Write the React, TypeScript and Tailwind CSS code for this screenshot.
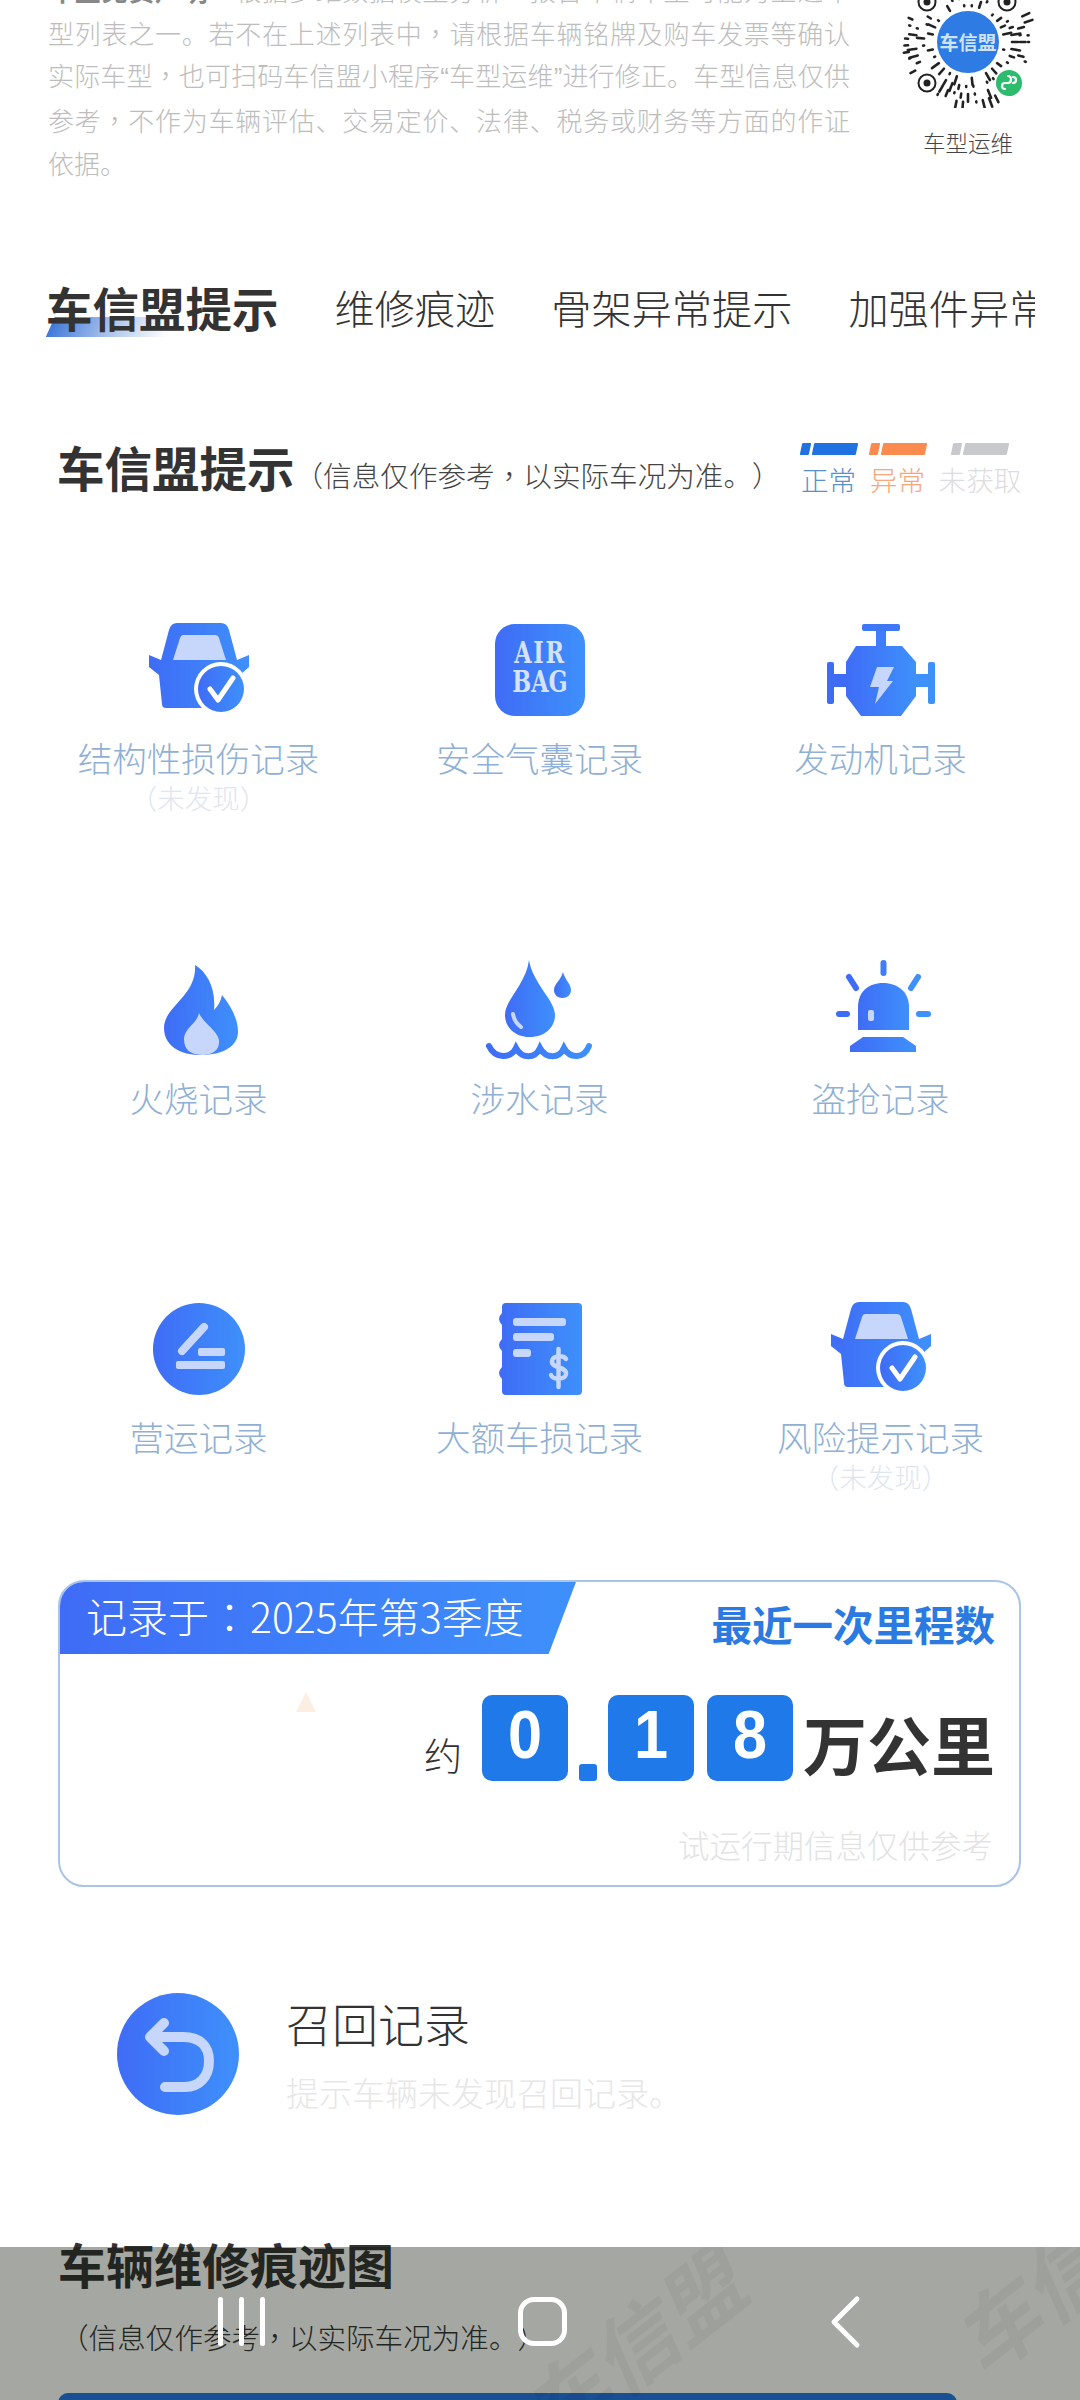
import type { ReactNode } from 'react';

const light = '#c6d7fb';

// 小程序码的放射短线,只是示意
const qrDashes: { a: number; r: number; len: number; w: number }[] = [];
let seed = 7;
const rand = () => {
  seed = (seed * 16807) % 2147483647;
  return seed / 2147483647;
};
for (let ring = 0; ring < 4; ring++) {
  const count = 30 + ring * 9;
  for (let i = 0; i < count; i++) {
    if (rand() < 0.28) continue;
    qrDashes.push({
      a: (i / count) * Math.PI * 2,
      r: 36 + ring * 8,
      len: rand() < 0.4 ? 1 : 3 + rand() * 6,
      w: 2.6,
    });
  }
}

// 参考图里逗号、冒号是居中的,繁体字形才这样
function Cp({ children }: { children: ReactNode }) {
  return <span className="font-['Noto_Sans_CJK_TC',sans-serif]">{children}</span>;
}

function MiniCode() {
  const cx = 68;
  const cy = 66;
  const corners = [
    [27, 26],
    [107, 26],
    [27, 107],
  ];
  return (
    <svg width="136" height="132" viewBox="0 0 136 132" className="shrink-0">
      {qrDashes.map((d, i) => {
        const x1 = cx + Math.cos(d.a) * d.r;
        const y1 = cy + Math.sin(d.a) * d.r;
        const x2 = cx + Math.cos(d.a) * (d.r + d.len);
        const y2 = cy + Math.sin(d.a) * (d.r + d.len);
        const nearCorner = corners.some(([px, py]) => Math.hypot(x1 - px, y1 - py) < 15);
        const nearBadge = Math.hypot(x1 - 109, y1 - 107) < 16;
        if (nearCorner || nearBadge) return null;
        return <line key={i} x1={x1} y1={y1} x2={x2} y2={y2} stroke="#222" strokeWidth={d.w} strokeLinecap="round" />;
      })}
      {corners.map(([px, py]) => (
        <g key={px * 1000 + py}>
          <circle cx={px} cy={py} r="8.5" fill="none" stroke="#222" strokeWidth="2" />
          <circle cx={px} cy={py} r="3.5" fill="#222" />
        </g>
      ))}
      <circle cx={cx} cy={cy} r="31" fill="#2d7be3" />
      <circle cx="109" cy="107" r="13" fill="#2dbb6e" />
      <path d="M105 113c-4 0-4-6 0-6h3c4 0 4-7 0-7M113 101c4 0 4 6 0 6" fill="none" stroke="#fff" strokeWidth="2.2" strokeLinecap="round" />
    </svg>
  );
}

function IconSvg({ children }: { children: ReactNode }) {
  return (
    <svg width="120" height="100" viewBox="0 0 120 100" className="shrink-0 overflow-visible">
      <defs>
        <linearGradient id="iconBlue" x1="0" y1="0" x2="1" y2="0">
          <stop offset="0" stopColor="#3f6cf6" />
          <stop offset="1" stopColor="#3e90fb" />
        </linearGradient>
      </defs>
      {children}
    </svg>
  );
}

const CarIcon = () => (
  <IconSvg>
    <g transform="translate(0 3)">
      <path
        d="M38 0H82Q88 0 90 7L98 37L110 32V44L101 52L99 81Q99 85 95 85H27Q23 85 23 81L20 52L10 44V32L22 37L30 7Q32 0 38 0Z"
        fill="url(#iconBlue)"
      />
      <path d="M44 12H76Q79 12 80 15L87 37H34L41 15Q42 12 44 12Z" fill={light} />
      <circle cx="82" cy="66" r="27" fill="#fff" />
      <circle cx="82" cy="66" r="23" fill="url(#iconBlue)" />
      <path d="M71 66L79 77L94 55" fill="none" stroke="#fff" strokeWidth="5" strokeLinecap="round" strokeLinejoin="round" />
    </g>
  </IconSvg>
);

const AirbagIcon = () => (
  <IconSvg>
    <rect x="15" y="4" width="90" height="92" rx="20" fill="url(#iconBlue)" />
    <g transform="translate(60 0) scale(0.86 1.15)" fontFamily="'DejaVu Serif', serif" fontWeight="700" fontSize="26" fill="#d5e2fc">
      <text x="0" y="37" textAnchor="middle" letterSpacing="2">
        AIR
      </text>
      <text x="0" y="63" textAnchor="middle">
        BAG
      </text>
    </g>
  </IconSvg>
);

const EngineIcon = () => (
  <IconSvg>
    <g transform="translate(0 4)" fill="url(#iconBlue)">
      <path d="M35 22H81L95 38V72L80 92H40L25 72V38Z" />
      <rect x="41" y="0" width="38" height="7" rx="2" fill="#3f78f7" />
      <rect x="55" y="7" width="10" height="16" fill="#3f7ef8" />
      <rect x="13" y="50" width="13" height="13" fill="#3f6cf6" />
      <rect x="94" y="50" width="14" height="13" fill="#3e90fb" />
      <rect x="6" y="38" width="7" height="42" rx="2" fill="#3f6cf6" />
      <rect x="107" y="38" width="7" height="42" rx="2" fill="#3e90fb" />
      <path d="M56 43H73L66 57H72L54 80L58 63H49Z" fill={light} />
    </g>
  </IconSvg>
);

const FlameIcon = () => (
  <IconSvg>
    <path
      d="M56 5C68 12 77 28 75 50C79 46 82 41 83 35C93 47 99 60 99 72C99 86 84 95 62 95C40 95 25 85 25 68C25 46 58 36 56 5Z"
      fill="url(#iconBlue)"
    />
    <path d="M60 53C64 63 78 70 80 80C81 90 74 95 64 95C52 95 45 90 45 79C45 68 58 64 60 53Z" fill={light} />
  </IconSvg>
);

const WaterIcon = () => (
  <IconSvg>
    <path d="M49 0C53 24 75 40 75 55C75 68 64 77 50 77C36 77 25 68 25 55C25 40 46 24 49 0Z" fill="url(#iconBlue)" />
    <path d="M83 12C85 20 91 24 91 30C91 35 87 38 82.5 38C78 38 74 35 74 30C74 24 81 20 83 12Z" fill="url(#iconBlue)" />
    <path d="M33 54C34 60 37 64 41 67" fill="none" stroke={light} strokeWidth="4" strokeLinecap="round" />
    <path d="M9 86C15 99 31 99 36 88C42 99 55 99 60 88C66 99 79 99 84 88C90 99 104 99 109 86" fill="none" stroke="url(#iconBlue)" strokeWidth="6" strokeLinecap="round" />
  </IconSvg>
);

const SirenIcon = () => (
  <IconSvg>
    <path d="M37 70V47C37 32 47 23 62 23C77 23 88 32 88 47V70Z" fill="url(#iconBlue)" />
    <path d="M42 77H82L95 86V92H29V86Z" fill="url(#iconBlue)" />
    <g fill="none" strokeWidth="6" strokeLinecap="round">
      <line x1="62.5" y1="3" x2="62.5" y2="13" stroke="#3f7ef8" />
      <line x1="28" y1="17" x2="35" y2="28" stroke="#3f6cf6" />
      <line x1="97" y1="17" x2="90" y2="28" stroke="#3e90fb" />
      <line x1="18" y1="54" x2="26" y2="54" stroke="#3f6cf6" />
      <line x1="98" y1="54" x2="107" y2="54" stroke="#3e90fb" />
    </g>
    <rect x="47" y="50" width="6" height="11" rx="2" fill={light} />
  </IconSvg>
);

const OperateIcon = () => (
  <IconSvg>
    <circle cx="60" cy="50" r="46" fill="url(#iconBlue)" />
    <path d="M65 28L43 52" fill="none" stroke={light} strokeWidth="8" strokeLinecap="round" />
    <rect x="59" y="49" width="27" height="8" rx="2" fill={light} />
    <rect x="37" y="62" width="49" height="8" rx="2" fill={light} />
  </IconSvg>
);

const LedgerIcon = () => (
  <IconSvg>
    <path d="M26 4H98Q102 4 102 8V92Q102 96 98 96H26Q22 96 22 92V80Q16 74 22 68V52Q16 46 22 40V26Q16 20 22 14V8Q22 4 26 4Z" fill="url(#iconBlue)" />
    <rect x="33" y="19" width="53" height="8" rx="3" fill={light} />
    <rect x="33" y="34" width="41" height="8" rx="3" fill={light} />
    <rect x="33" y="50" width="18" height="8" rx="3" fill={light} />
    <path d="M86 60C84 56 73 56 72 62C71 70 87 67 86 75C85 81 73 81 71 76M78.500 50V88" fill="none" stroke={light} strokeWidth="4.500" strokeLinecap="round" />
  </IconSvg>
);

const RecallIcon = () => (
  <svg width="122" height="122" viewBox="0 0 122 122" className="shrink-0">
    <defs>
      <linearGradient id="recallBlue" x1="0" y1="0" x2="1" y2="0">
        <stop offset="0" stopColor="#3f6cf6" />
        <stop offset="1" stopColor="#3e90fb" />
      </linearGradient>
    </defs>
    <circle cx="61" cy="61" r="61" fill="url(#recallBlue)" />
    <path d="M38 44H66C84 44 92 54 92 68C92 84 82 94 68 94H48" fill="none" stroke={light} strokeWidth="10" strokeLinecap="round" />
    <path d="M47 30L33 44L47 58" fill="none" stroke={light} strokeWidth="10" strokeLinecap="round" strokeLinejoin="round" />
  </svg>
);

const records = [
  { icon: <CarIcon />, label: '结构性损伤记录', note: '（未发现）' },
  { icon: <AirbagIcon />, label: '安全气囊记录' },
  { icon: <EngineIcon />, label: '发动机记录' },
  { icon: <FlameIcon />, label: '火烧记录' },
  { icon: <WaterIcon />, label: '涉水记录' },
  { icon: <SirenIcon />, label: '盗抢记录' },
  { icon: <OperateIcon />, label: '营运记录' },
  { icon: <LedgerIcon />, label: '大额车损记录' },
  { icon: <CarIcon />, label: '风险提示记录', note: '（未发现）' },
];

function LegendItem({ bar, text, label, wide }: { bar: string; text: string; label: string; wide?: boolean }) {
  return (
    <div className={wide ? 'flex w-[84px] shrink-0 flex-col items-center' : 'flex w-[57px] shrink-0 flex-col items-center'}>
      <div className="flex h-[12px] w-[56px] -skew-x-12 gap-[3px]">
        <div className={`w-[9px] rounded-[1px] ${bar}`} />
        <div className={`flex-1 rounded-[1px] ${bar}`} />
      </div>
      <div className={`mt-[8px] text-[27.6px] leading-[32px] whitespace-nowrap ${text}`}>{label}</div>
    </div>
  );
}

function DigitBox({ value }: { value: string }) {
  return (
    <div className="flex h-[86px] w-[86px] items-start justify-center rounded-[10px] bg-[#1f79e8] font-['Liberation_Sans',sans-serif] text-[68px] leading-[78px] font-bold text-white">
      <span className="inline-block scale-x-90">{value}</span>
    </div>
  );
}

export default function App() {
  return (
    <div className="relative h-[2400px] w-[1080px] overflow-hidden bg-white font-['Noto_Sans_CJK_SC','Noto_Sans',sans-serif] font-light text-[#333] [text-spacing-trim:space-all]">
      {/* 页面已滚动,顶部段落被裁掉一部分 */}
      <section className="flex h-[250px] items-start">
        <p className="mt-[-31px] ml-[48px] w-[802px] text-justify text-[26px] leading-[42.7px] text-[#bdbdbd]">
          <span className="font-bold text-[#888]">
            车型免责声明<Cp>：</Cp>
          </span>
          根据多维数据模型分析<Cp>，</Cp>报告车辆车型可能为上述车型列表之一。若不在上述列表中<Cp>，</Cp>请根据车辆铭牌及购车发票等确认实际车型<Cp>，</Cp>也可扫码车信盟小程序
          <span className="font-['Liberation_Sans',sans-serif]">“</span>车型运维<span className="font-['Liberation_Sans',sans-serif]">”</span>
          进行修正。车型信息仅供参考<Cp>，</Cp>不作为车辆评估、交易定价、法律、税务或财务等方面的作证依据。
        </p>
        <div className="mt-[-24px] ml-[50px] flex flex-col items-center">
          <div className="relative">
            <MiniCode />
            <div className="absolute top-[54px] left-0 w-full text-center text-[19px] leading-[24px] font-bold text-[#cfe2fb]">车信盟</div>
          </div>
          <div className="mt-[21px] text-[22.5px] leading-[26px] text-[#444]">车型运维</div>
        </div>
      </section>

      <nav className="relative mt-[27px] ml-[46px] flex h-[60px] w-[989px] items-center gap-[56px] overflow-hidden whitespace-nowrap">
        <div className="absolute top-[40px] left-[4px] h-[21px] w-[120px] -skew-x-[24deg] bg-gradient-to-r from-[#3f78d8] via-[#a9c2ea] to-white" />
        <span className="relative shrink-0 text-[46.5px] leading-[60px] font-bold text-[#333]">车信盟提示</span>
        <span className="shrink-0 text-[40.2px] leading-[60px]">维修痕迹</span>
        <span className="shrink-0 text-[40.2px] leading-[60px]">骨架异常提示</span>
        <span className="shrink-0 text-[40.2px] leading-[60px]">加强件异常</span>
      </nav>

      <header className="mt-[95px] flex h-[70px] items-center pl-[57px]">
        <h2 className="shrink-0 text-[47.5px] leading-[60px] font-bold text-[#333]">车信盟提示</h2>
        <span className="mt-[16px] shrink-0 text-[28.6px] leading-[40px] whitespace-nowrap text-[#444]">
          （信息仅作参考<Cp>，</Cp>以实际车况为准。）
        </span>
        <div className="mt-[4px] ml-auto mr-[58px] flex shrink-0 gap-[12px]">
          <LegendItem bar="bg-[#1f72df]" text="text-[#5a8fc8]" label="正常" />
          <LegendItem bar="bg-[#fb8a4e]" text="text-[#f7a67c]" label="异常" />
          <LegendItem bar="bg-[#c8c9cc]" text="text-[#dddddd]" label="未获取" wide />
        </div>
      </header>

      <section className="mt-[122px] ml-[28px] grid w-[1023px] grid-cols-3 grid-rows-[340px_339px_277px]">
        {records.map((r) => (
          <div key={r.label} className="flex flex-col items-center">
            <div className="flex h-[92px] items-center">{r.icon}</div>
            <div className="mt-[21px] text-[34.5px] leading-[40px] text-[#8fb0d4]">{r.label}</div>
            {r.note && <div className="mt-[2px] text-[27.5px] leading-[36px] text-[#dfe6ef]">{r.note}</div>}
          </div>
        ))}
      </section>

      <section className="relative ml-[58px] h-[307px] w-[963px] overflow-hidden rounded-[26px] border-2 border-[#a9c4e8]">
        <div className="absolute top-[110px] left-[236px] h-0 w-0 border-x-[10px] border-b-[20px] border-x-transparent border-b-[#fdeee2]" />
        <div className="flex items-start justify-between pr-[24px]">
          <div className="flex h-[72px] w-[516px] items-center bg-gradient-to-r from-[#3f6cf6] to-[#3e90fb] pb-[6px] pl-[26px] text-[41px] leading-[50px] whitespace-nowrap text-white [clip-path:polygon(0_0,100%_0,94.7%_100%,0_100%)]">
            记录于<Cp>：</Cp>2025年第3季度
          </div>
          <div className="mt-[17px] text-[40.5px] leading-[50px] font-bold text-[#2a7ae2]">最近一次里程数</div>
        </div>
        <div className="mt-[41px] flex items-end justify-end pr-[24px]">
          <span className="mb-[2px] mr-[20px] text-[38px] leading-[50px] text-[#333]">约</span>
          <DigitBox value="0" />
          <div className="mx-[11px] h-[17px] w-[18px] rounded-[3px] bg-[#1f79e8]" />
          <DigitBox value="1" />
          <div className="w-[13px]" />
          <DigitBox value="8" />
          <span className="ml-[10px] mb-[-4px] text-[64px] leading-[86px] font-bold text-[#333]">万公里</span>
        </div>
        <div className="mt-[41px] pr-[26px] text-right text-[31.5px] leading-[44px] text-[#e3e3e3]">试运行期信息仅供参考</div>
      </section>

      <section className="mt-[106px] flex items-center pl-[117px]">
        <RecallIcon />
        <div className="ml-[47px] mt-[-2px]">
          <div className="text-[46px] leading-[60px] text-[#333]">召回记录</div>
          <div className="mt-[17px] text-[33px] leading-[46px] text-[#e7e7e7]">提示车辆未发现召回记录。</div>
        </div>
      </section>

      <section className="mt-[118px] pl-[58px]">
        <h2 className="text-[48px] leading-[60px] font-bold text-[#333]">车辆维修痕迹图</h2>
        <div className="mt-[24px] pl-[2px] text-[28.6px] leading-[40px] whitespace-nowrap text-[#333]">
          （信息仅作参考<Cp>，</Cp>以实际车况为准。）
        </div>
        <div className="mt-[36px] h-[60px] w-[899px] rounded-t-[10px] bg-[#2476e6]" />
      </section>

      {/* 系统导航条,半透明盖在页面上,水印在它里面 */}
      <div className="absolute inset-x-0 bottom-0 flex h-[153px] items-start overflow-hidden bg-[#060a00]/[0.36] pt-[50px] pl-[218px]">
        <div className="absolute top-[50px] left-[505px] -rotate-[38deg] text-[84px] leading-[96px] font-bold whitespace-nowrap text-black/[0.04] italic">车信盟</div>
        <div className="absolute top-[-22px] left-[935px] -rotate-[38deg] text-[84px] leading-[96px] font-bold whitespace-nowrap text-black/[0.04] italic">车信盟</div>
        <div className="relative flex h-[49px] w-[47px] justify-between">
          <div className="h-full w-[5px] rounded-full bg-white" />
          <div className="h-full w-[5px] rounded-full bg-white" />
          <div className="h-full w-[5px] rounded-full bg-white" />
        </div>
        <div className="relative ml-[253px] h-[49px] w-[49px] rounded-[16px] border-[5px] border-white" />
        <svg width="34" height="54" viewBox="0 0 34 54" className="relative mt-[-2px] ml-[262px]">
          <path d="M28 4L5 27L28 50" fill="none" stroke="#fff" strokeWidth="5" strokeLinecap="round" strokeLinejoin="round" />
        </svg>
      </div>
    </div>
  );
}
